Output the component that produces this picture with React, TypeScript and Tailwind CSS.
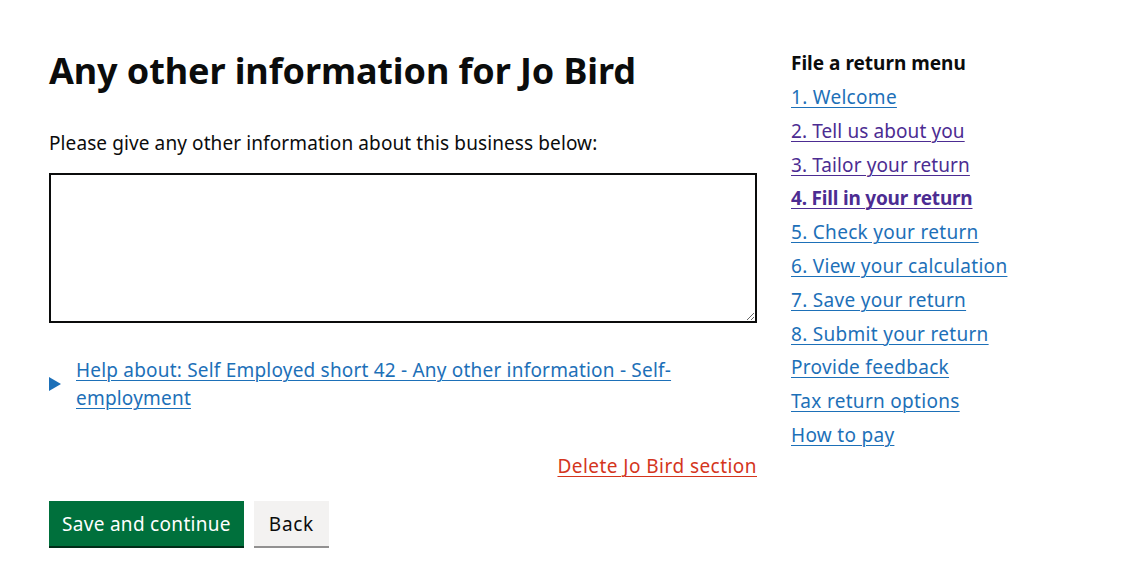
const menu = [
  { label: '1. Welcome', visited: false },
  { label: '2. Tell us about you', visited: true },
  { label: '3. Tailor your return', visited: true },
  { label: '4. Fill in your return', visited: true, current: true },
  { label: '5. Check your return', visited: false },
  { label: '6. View your calculation', visited: false },
  { label: '7. Save your return', visited: false },
  { label: '8. Submit your return', visited: false },
  { label: 'Provide feedback', visited: false },
  { label: 'Tax return options', visited: false },
  { label: 'How to pay', visited: false },
];

export default function App() {
  return (
    <div
      className="min-h-screen bg-white text-[#0b0c0c]"
      style={{ fontFamily: '"Noto Sans", Arial, sans-serif' }}
    >
      <div className="flex pl-[49px] pt-[47px]">
        <main className="w-[708px] shrink-0">
          <h1 className="text-[36px] font-bold leading-[48px] tracking-[-0.1px]">
            Any other information for Jo Bird
          </h1>

          <label className="mt-[36px] block text-[19px] leading-[25px] tracking-[0.1px]">
            Please give any other information about this business below:
          </label>
          <textarea
            className="mt-[17px] block h-[150px] w-full resize-y border-2 border-[#0b0c0c] p-[5px] text-[19px] outline-none"
            rows={5}
          />

          <details className="mt-[33px]">
            <summary className="flex cursor-pointer list-none items-center text-[19px] leading-[28px] tracking-[0.2px] text-[#1d70b8]">
              <span className="mr-[15px] block h-0 w-0 shrink-0 border-y-[7px] border-l-[12px] border-y-transparent border-l-[#1d70b8]" />
              <span className="underline decoration-1 underline-offset-[3px]">
                Help about: Self Employed short 42 - Any other information - Self-employment
              </span>
            </summary>
          </details>

          <div className="mt-[42px] flex justify-end">
            <a href="#" className="text-[19px] leading-[25px] tracking-[0.45px] text-[#d4351c] underline decoration-1 underline-offset-[3px]">
              Delete Jo Bird section
            </a>
          </div>

          <div className="mt-[22px] flex gap-[10px]">
            <button className="h-[45px] bg-[#00703c] px-[13px] pt-[1px] text-[19px] leading-[25px] tracking-[0.3px] text-white shadow-[0_2px_0_#002d18]">
              Save and continue
            </button>
            <button className="h-[45px] bg-[#f3f2f1] px-[15px] pt-[1px] text-[19px] leading-[25px] tracking-[0.7px] text-[#0b0c0c] shadow-[0_2px_0_#929191]">
              Back
            </button>
          </div>
        </main>

        <nav className="ml-[34px] w-[300px]">
          <h2 className="mt-[4px] text-[19px] font-bold leading-[25px]">File a return menu</h2>
          <ul className="mt-[5px]">
            {menu.map((item) => (
              <li key={item.label} className="text-[19px] leading-[33.8px]">
                <a
                  href="#"
                  className={
                    'underline decoration-1 underline-offset-[3px] ' +
                    (item.visited ? 'text-[#4c2c92] ' : 'text-[#1d70b8] ') +
                    (item.current ? 'font-bold tracking-[-0.2px]' : item.visited ? 'tracking-[0.1px]' : 'tracking-[0.3px]')
                  }
                >
                  {item.label}
                </a>
              </li>
            ))}
          </ul>
        </nav>
      </div>
    </div>
  );
}
